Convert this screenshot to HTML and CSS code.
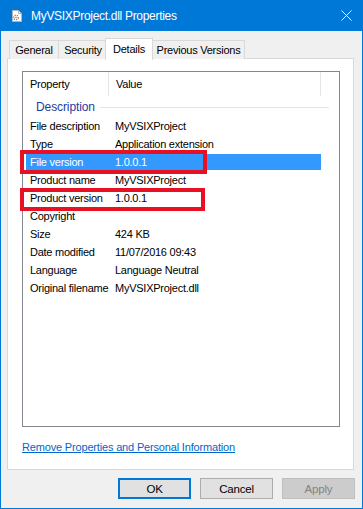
FILE: index.html
```html
<!DOCTYPE html>
<html lang="en">
<head>
    <meta charset="UTF-8">
    <meta name="viewport" content="width=device-width, initial-scale=1.0">
    <title>MyVSIXProject.dll Properties</title>
    <link rel="stylesheet" href="styles.css">
</head>
<body>
    <div class="window">
        <!-- Barra de título -->
        <div class="titlebar">
            <svg class="title-icon" width="12" height="12" viewBox="0 0 12 12">
                <path d="M1.5 0.5h6l3 3v8h-9z" fill="#fff" stroke="#b5b5b5"/>
                <path d="M7.5 0.5v3h3" fill="none" stroke="#b5b5b5"/>
                <circle cx="5" cy="7.5" r="2.3" fill="none" stroke="#8a8a8a" stroke-width="1.4" stroke-dasharray="1.2 0.9"/>
                <circle cx="5" cy="7.5" r="0.8" fill="#8a8a8a"/>
            </svg>
            <span class="title-text">MyVSIXProject.dll Properties</span>
            <svg class="close-icon" width="11" height="11" viewBox="0 0 11 11">
                <path d="M0.5 0.5l10 10M10.5 0.5l-10 10" stroke="#fff" stroke-width="1"/>
            </svg>
        </div>

        <!-- Pestañas -->
        <div class="tabs">
            <div class="tab tab-general">General</div>
            <div class="tab tab-security">Security</div>
            <div class="tab tab-active">Details</div>
            <div class="tab tab-previous">Previous Versions</div>
        </div>

        <div class="panel">
            <div class="listview">
                <div class="lv-header">
                    <div class="lv-col lv-col-prop">Property</div>
                    <div class="lv-col lv-col-val">Value</div>
                </div>
                <div class="lv-group">
                    <span class="lv-group-title">Description</span>
                    <span class="lv-group-line"></span>
                </div>
                <div class="lv-row"><span class="lv-prop">File description</span><span class="lv-val">MyVSIXProject</span></div>
                <div class="lv-row"><span class="lv-prop">Type</span><span class="lv-val">Application extension</span></div>
                <div class="lv-row lv-selected"><span class="lv-prop">File version</span><span class="lv-val">1.0.0.1</span></div>
                <div class="lv-row"><span class="lv-prop">Product name</span><span class="lv-val">MyVSIXProject</span></div>
                <div class="lv-row"><span class="lv-prop">Product version</span><span class="lv-val">1.0.0.1</span></div>
                <div class="lv-row"><span class="lv-prop">Copyright</span><span class="lv-val"></span></div>
                <div class="lv-row"><span class="lv-prop">Size</span><span class="lv-val">424 KB</span></div>
                <div class="lv-row"><span class="lv-prop">Date modified</span><span class="lv-val">11/07/2016 09:43</span></div>
                <div class="lv-row"><span class="lv-prop">Language</span><span class="lv-val">Language Neutral</span></div>
                <div class="lv-row"><span class="lv-prop">Original filename</span><span class="lv-val">MyVSIXProject.dll</span></div>
            </div>
            <a class="remove-link" href="#">Remove Properties and Personal Information</a>
        </div>

        <div class="buttons">
            <button class="btn btn-default">OK</button>
            <button class="btn">Cancel</button>
            <button class="btn" disabled>Apply</button>
        </div>

        <!-- Marcas rojas sobre la captura -->
        <div class="mark mark-file-version"></div>
        <div class="mark mark-product-version"></div>
    </div>
</body>
</html>
```

FILE: styles.css
```css
* {
    box-sizing: border-box;
}

body {
    margin: 0;
    font-family: "Liberation Sans", Arial, sans-serif;
    font-size: 11px;
    letter-spacing: -0.25px;
    color: #000;
}

.window {
    position: relative;
    width: 363px;
    height: 509px;
    border: 1px solid #0078d7;
    border-top: none;
    background: #f0f0f0;
    display: flex;
    flex-direction: column;
}

.titlebar {
    height: 31px;
    background: #0078d7;
    display: flex;
    align-items: center;
    padding: 0 0 0 11px;
    color: #fff;
    margin: 0 -1px;
}

.title-icon {
    margin-right: 8px;
    margin-top: 1px;
}

.title-text {
    font-size: 12px;
    letter-spacing: -0.3px;
    flex: 1;
    padding-top: 1px;
}

.close-icon {
    margin-right: 11px;
}

.tabs {
    display: flex;
    align-items: flex-end;
    margin: 7px 0 0 8px;
    height: 21px;
    position: relative;
    z-index: 1;
}

.tab {
    height: 19px;
    border: 1px solid #d9d9d9;
    border-bottom: none;
    background: #f0f0f0;
    line-height: 19px;
    text-align: center;
    margin-right: -1px;
}

.tab-general {
    width: 50px;
}

.tab-security {
    width: 50px;
}

.tab-previous {
    width: 93px;
}

.tab-active {
    width: 48px;
    height: 22px;
    background: #fff;
    margin: 0 -1px -1px -2px;
    line-height: 20px;
    position: relative;
    z-index: 2;
}

.panel {
    margin: -1px 8px 0 6px;
    height: 412px;
    background: #fff;
    border: 1px solid #d9d9d9;
    padding: 12px 13px 0 14px;
    display: flex;
    flex-direction: column;
}

.listview {
    width: 318px;
    height: 356px;
    border: 1px solid #828790;
}

.lv-header {
    display: flex;
    height: 24px;
    align-items: center;
}

.lv-col {
    height: 24px;
    line-height: 24px;
    padding-left: 7px;
    border-right: 1px solid #e5e5e5;
}

.lv-col-prop {
    width: 86px;
}

.lv-col-val {
    width: 212px;
}

.lv-group {
    display: flex;
    align-items: center;
    height: 21px;
    padding: 0 10px 0 13px;
}

.lv-group-title {
    color: #1e3ca0;
    font-size: 12px;
    letter-spacing: -0.1px;
    margin-right: 5px;
}

.lv-group-line {
    flex: 1;
    height: 1px;
    background: #e2e5ec;
    margin-top: 1px;
}

.lv-row {
    display: flex;
    height: 18px;
    line-height: 18px;
    margin: 0 18px 0 3px;
}

.lv-prop {
    width: 82px;
    padding-left: 4px;
    white-space: nowrap;
}

.lv-val {
    padding-left: 7px;
    white-space: nowrap;
}

.lv-selected {
    background: #3399ff;
    color: #fff;
    height: 16px;
    line-height: 16px;
    margin-top: 1px;
    margin-bottom: 1px;
}

.remove-link {
    margin-top: 14px;
    color: #0066cc;
    text-decoration: underline;
    letter-spacing: -0.17px;
    align-self: flex-start;
}

.buttons {
    display: flex;
    justify-content: flex-end;
    gap: 9px;
    padding: 8px 7px 0 0;
}

.btn {
    width: 73px;
    height: 21px;
    font-family: "Liberation Sans", Arial, sans-serif;
    font-size: 11.5px;
    letter-spacing: -0.2px;
    color: #000;
    background: #e1e1e1;
    border: 1px solid #adadad;
    padding: 0;
}

.btn-default {
    border: 2px solid #0078d7;
}

.btn:disabled {
    background: #cccccc;
    border-color: #bfbfbf;
    color: #838383;
}

.mark {
    position: absolute;
    border: 4px solid #e81123;
}

.mark-file-version {
    left: 19px;
    top: 150px;
    width: 187px;
    height: 24px;
}

.mark-product-version {
    left: 19px;
    top: 188px;
    width: 185px;
    height: 23px;
}
```
